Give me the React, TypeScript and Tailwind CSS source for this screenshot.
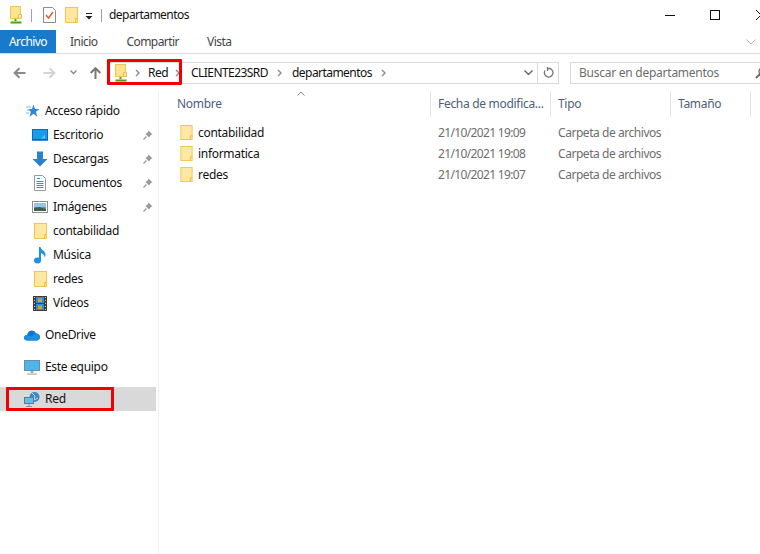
import type { ReactNode } from 'react'

const font = { fontFamily: '"Noto Sans", sans-serif' }

function Folder({ className = 'h-[16px] w-[13px]' }: { className?: string }) {
  return (
    <svg viewBox="0 0 13 16" className={className}>
      <rect x="0.5" y="0.5" width="12" height="15" fill="#ffe8a4" stroke="#f0c648" />
      <path d="M10.5 15.5v-4h2" fill="#fbd96f" stroke="#ecc04a" />
    </svg>
  )
}

function NetFolder() {
  return (
    <svg viewBox="0 0 13 18" className="h-[18px] w-[13px]">
      <rect x="0.5" y="0.5" width="10" height="12" fill="#ffe48f" stroke="#eec754" />
      <path d="M8.5 12.5v-4h3v4z" fill="#ffe9a8" stroke="#e8bf4d" />
      <path d="M5.5 13v2" stroke="#4a9c1a" strokeWidth="2" />
      <path d="M0.5 16.5h11" stroke="#44a512" strokeWidth="2" />
    </svg>
  )
}

function Checklist() {
  return (
    <svg viewBox="0 0 13 16" className="h-[16px] w-[13px]">
      <path d="M.5.5h9l3 3v12H.5z" fill="#fff" stroke="#8c8c8c" />
      <path d="M3 8l2.5 3L10 5" fill="none" stroke="#e2582c" strokeWidth="1.4" />
    </svg>
  )
}

function Arrow({ color, flip = false, up = false }: { color: string; flip?: boolean; up?: boolean }) {
  const rotate = up ? 'rotate-90' : flip ? 'rotate-180' : ''
  return (
    <svg viewBox="0 0 13 12" className={`h-[12px] w-[13px] ${rotate}`}>
      <path d="M12.5 6H2M6.5 1.2L1.6 6l4.9 4.8" fill="none" stroke={color} strokeWidth="2" />
    </svg>
  )
}

function Chevron({ color = '#8a8a8a', className = '' }: { color?: string; className?: string }) {
  return (
    <svg viewBox="0 0 5 8" className={`h-[8px] w-[5px] ${className}`}>
      <path d="M1 1l3 3-3 3" fill="none" stroke={color} strokeWidth="1.4" />
    </svg>
  )
}

function ChevronDown({ w, color, stroke = 1.4 }: { w: number; color: string; stroke?: number }) {
  return (
    <svg width={w} height={w / 2 + 1} viewBox={`0 0 ${w} ${w / 2 + 1}`}>
      <path d={`M.5 .5L${w / 2} ${w / 2}L${w - 0.5} .5`} fill="none" stroke={color} strokeWidth={stroke} />
    </svg>
  )
}

function Pin() {
  return (
    <svg viewBox="0 0 10 10" className="h-[10px] w-[10px]">
      <path d="M5.5 0.5L9.5 4.5L8 5L6 7.5L2.5 4L5 2z" fill="#9a9a9a" />
      <path d="M3.5 6.5L0.5 9.5" stroke="#9a9a9a" strokeWidth="1.2" />
    </svg>
  )
}

function QuickStar() {
  return (
    <svg viewBox="0 0 16 14" className="h-[14px] w-[16px]">
      <path d="M9.5 0.5L11 5h4.5l-3.6 2.8 1.4 5-3.8-3-4 3 1.4-5L3.8 5H8z" fill="#2f86d4" />
      <path d="M2 3h5M3 6h3M2 9h3" stroke="#7db9e8" strokeWidth="1" />
    </svg>
  )
}

function Desktop() {
  return (
    <svg viewBox="0 0 16 12" className="h-[12px] w-[16px]">
      <rect x="0.5" y="0.5" width="15" height="10" fill="#1a9be8" stroke="#0a6cb8" />
      <path d="M9 9.5l4-4v4z" fill="#5cc0f5" />
      <path d="M0 11.5h16" stroke="#3b8cc8" />
    </svg>
  )
}

function Downloads() {
  return (
    <svg viewBox="0 0 16 16" className="h-[16px] w-[16px]">
      <path d="M5 0.5h6V8h4.5L8 15.5.5 8H5z" fill="#2f7fd0" />
    </svg>
  )
}

function Documents() {
  return (
    <svg viewBox="0 0 12 16" className="h-[16px] w-[12px]">
      <path d="M.5.5h8l3 3v12H.5z" fill="#fff" stroke="#9a9a9a" />
      <path d="M3 3.500h3M2.500 6.500h7M2.500 8.500h7M2.500 10.500h7M2.500 12.500h7" stroke="#3f8ccc" />
    </svg>
  )
}

function Pictures() {
  return (
    <svg viewBox="0 0 16 12" className="h-[12px] w-[16px]">
      <rect x="0.5" y="0.5" width="15" height="11" fill="#fff" stroke="#8f8f8f" />
      <rect x="2" y="2" width="12" height="4" fill="#9cc4e4" />
      <path d="M2 6h12v4H2z" fill="#6f9a78" />
      <path d="M2 7l5-1 7 2v2H2z" fill="#3f5f4c" />
    </svg>
  )
}

function Music() {
  return (
    <svg viewBox="0 0 12 17" className="h-[17px] w-[12px]">
      <ellipse cx="3.500" cy="13.500" rx="3.500" ry="3" fill="#1a93e6" />
      <path d="M5 14V0h1.500c.5 3 5 3.500 5 8 0 1.200-.3 2-.8 2.800 0-2.800-2-4.300-3.700-4.800V14z" fill="#1a93e6" />
    </svg>
  )
}

function Videos() {
  return (
    <svg viewBox="0 0 14 15" className="h-[15px] w-[14px]">
      <rect x="0" y="0" width="14" height="15" fill="#3d3d3d" />
      <path d="M1 1.500h1M1 4.500h1M1 7.500h1M1 10.500h1M1 13.500h1M12 1.500h1M12 4.500h1M12 7.500h1M12 10.500h1M12 13.500h1" stroke="#d0d0d0" />
      <rect x="3" y="1" width="8" height="6" fill="#2f8fd8" />
      <rect x="3" y="8" width="8" height="6" fill="#2f8fd8" />
      <rect x="5" y="2.500" width="4" height="3.500" fill="#c9a13a" />
      <rect x="5" y="9.500" width="4" height="3.500" fill="#c9a13a" />
    </svg>
  )
}

function OneDrive() {
  return (
    <svg viewBox="0 0 16 11" className="h-[11px] w-[16px]">
      <path d="M3.500 10.500C1.500 10.500 0 9.300 0 7.700 0 6.200 1.300 5 3 5c.5-2.600 2.500-4.500 4.800-4.500 1.900 0 3.500 1.200 4.200 3 2.300-.1 4 1.500 4 3.500s-1.500 3.500-3.500 3.500z" fill="#0f78d4" />
      <path d="M3 10.500c-1.500 0-3-1-3-2.800C0 6.200 1.300 5 3 5l4 1.500 5-3c2.300-.1 4 1.500 4 3.500 0 1.500-1 3.500-3.500 3.500z" fill="#1c90e0" />
    </svg>
  )
}

function Computer() {
  return (
    <svg viewBox="0 0 16 15" className="h-[15px] w-[16px]">
      <rect x="0.5" y="0.5" width="15" height="10" fill="#4fb4ea" stroke="#6c8ca4" />
      <path d="M8 11v2" stroke="#9fb0bc" strokeWidth="3" />
      <path d="M3 14h10" stroke="#8ca0ae" />
    </svg>
  )
}

function Network() {
  return (
    <svg viewBox="0 0 16 15" className="h-[15px] w-[16px]">
      <circle cx="10.500" cy="5" r="5" fill="#3e88c6" />
      <path d="M8 1l3 3-1 4 4-2" stroke="#b8d8ee" fill="none" />
      <rect x="0.500" y="5.500" width="9" height="6" fill="#63bcec" stroke="#5a7d96" />
      <path d="M5 12v2M2 14.500h6" stroke="#83959f" />
    </svg>
  )
}

type NavRow = { icon: ReactNode; label: string; pin?: boolean; sub?: boolean; gap?: boolean; selected?: boolean }

const quick: NavRow[] = [
  { icon: <QuickStar />, label: 'Acceso rápido' },
  { icon: <Desktop />, label: 'Escritorio', pin: true, sub: true },
  { icon: <Downloads />, label: 'Descargas', pin: true, sub: true },
  { icon: <Documents />, label: 'Documentos', pin: true, sub: true },
  { icon: <Pictures />, label: 'Imágenes', pin: true, sub: true },
  { icon: <Folder />, label: 'contabilidad', sub: true },
  { icon: <Music />, label: 'Música', sub: true },
  { icon: <Folder />, label: 'redes', sub: true },
  { icon: <Videos />, label: 'Vídeos', sub: true },
  { icon: <OneDrive />, label: 'OneDrive', gap: true },
  { icon: <Computer />, label: 'Este equipo', gap: true },
  { icon: <Network />, label: 'Red', gap: true, selected: true },
]

const files = [
  { name: 'contabilidad', date: '21/10/2021 19:09' },
  { name: 'informatica', date: '21/10/2021 19:08' },
  { name: 'redes', date: '21/10/2021 19:07' },
]

function SidebarRow({ row }: { row: NavRow }) {
  return (
    <div
      className={`flex h-[24px] items-center ${row.gap ? 'mt-[8px]' : ''} ${row.selected ? 'bg-[#d9d9d9]' : ''} ${
        row.sub ? 'pl-[32px]' : 'pl-[24px]'
      }`}
    >
      <span className="mr-[5px] flex w-[16px] shrink-0 items-center justify-center">{row.icon}</span>
      <span className="flex-1 whitespace-nowrap">{row.label}</span>
      {row.pin && (
        <span className="mr-[3px] flex w-[10px] justify-center">
          <Pin />
        </span>
      )}
    </div>
  )
}

export default function App() {
  return (
    <div style={font} className="relative h-[554px] w-[760px] overflow-hidden bg-white text-[12px] leading-none tracking-[-0.3px] text-[#1a1a1a]">
      {/* title bar */}
      <div className="flex h-[30px] items-center">
        <div className="ml-[10px] flex w-[13px]"><NetFolder /></div>
        <div className="ml-[8px] h-[13px] w-px bg-[#a0a0a0]" />
        <div className="ml-[11px] flex"><Checklist /></div>
        <div className="ml-[9px] flex"><Folder /></div>
        <svg viewBox="0 0 8 7" className="ml-[7px] mt-[3px] h-[7px] w-[8px]">
          <path d="M1 .5h6" stroke="#222" />
          <path d="M.5 3h7L4 6.500z" fill="#222" />
        </svg>
        <div className="ml-[8px] h-[13px] w-px bg-[#a0a0a0]" />
        <span className="ml-[7px] tracking-[-0.55px] text-[#111]">departamentos</span>
        <div className="flex-1" />
        <div className="mr-[35px] h-px w-[10px] bg-[#111]" />
        <div className="mr-[36px] h-[10px] w-[10px] border border-[#111]" />
        <svg viewBox="0 0 10 10" className="-mr-[6px] h-[10px] w-[10px] shrink-0">
          <path d="M0 0l10 10M10 0L0 10" stroke="#111" />
        </svg>
      </div>

      {/* ribbon tabs */}
      <div className="flex h-[24px] items-stretch border-b border-[#dadbdc] tracking-[-0.55px]">
        <div className="flex w-[56px] items-center justify-center bg-[#1979ca] text-white">Archivo</div>
        <span className="ml-[14px] flex items-center text-[#444]">Inicio</span>
        <span className="ml-[29px] flex items-center text-[#444]">Compartir</span>
        <span className="ml-[28px] flex items-center text-[#444]">Vista</span>
        <div className="flex flex-1 items-center justify-end pr-[4px]">
          <ChevronDown w={10} color="#b4b4b4" stroke={1} />
        </div>
      </div>

      {/* nav bar */}
      <div className="flex h-[37px] items-center">
        <div className="ml-[13px] flex"><Arrow color="#8a8a8a" /></div>
        <div className="ml-[17px] flex"><Arrow color="#d4d4d4" flip /></div>
        <div className="ml-[14px] flex"><ChevronDown w={7} color="#8a8a8a" /></div>
        <div className="ml-[12px] flex"><Arrow color="#777777" up /></div>
        <div className="ml-[7px] flex h-[22px] w-[450px] shrink-0 items-center border border-[#d9d9d9] pl-[5px] tracking-[-0.55px]">
          <NetFolder />
          <Chevron className="ml-[7px]" />
          <span className="ml-[8px] text-[#111]">Red</span>
          <Chevron className="ml-[7px]" />
          <span className="ml-[11px] text-[#111]">CLIENTE23SRD</span>
          <Chevron className="ml-[9px]" />
          <span className="ml-[10px] text-[#111]">departamentos</span>
          <Chevron className="ml-[9px]" />
          <div className="flex-1" />
          <ChevronDown w={9} color="#666666" />
          <div className="ml-[4px] h-full w-px bg-[#d9d9d9]" />
          <svg viewBox="0 0 12 12" className="mx-[4px] h-[12px] w-[12px]">
            <path d="M5 1.500h2.500A4.300 4.300 0 1 1 3 3.500" fill="none" stroke="#777" strokeWidth="1.300" />
            <path d="M5.500 0v4" stroke="#777" strokeWidth="1.300" />
          </svg>
        </div>
        <div className="ml-[11px] flex h-[22px] w-[210px] shrink-0 items-center border border-[#d9d9d9] pl-[8px] tracking-[-0.25px] text-[#6d6d6d]">
          <span>Buscar en departamentos</span>
          <svg viewBox="0 0 12 12" className="ml-[36px] h-[12px] w-[12px] shrink-0">
            <circle cx="7.500" cy="4.500" r="3.500" fill="none" stroke="#666" strokeWidth="1.300" />
            <path d="M5 7l-4 4" stroke="#666" strokeWidth="1.800" />
          </svg>
        </div>
      </div>

      {/* body */}
      <div className="flex h-[463px]">
        <div className="w-[159px] shrink-0 border-r border-[#f0f0f0] pt-[8px]">
          <div className="w-[156px] text-[#111]">
            {quick.map((row) => (
              <SidebarRow key={row.label} row={row} />
            ))}
          </div>
        </div>

        <div className="relative flex-1">
          <div className="grid h-[26px] grid-cols-[272px_120px_120px_80px] items-stretch text-[#4c607a]">
            <div className="border-r border-[#e5e5e5] pl-[18px] pt-[7px]">Nombre</div>
            <div className="border-r border-[#e5e5e5] pl-[7px] pt-[7px]">Fecha de modifica...</div>
            <div className="border-r border-[#e5e5e5] pl-[7px] pt-[7px]">Tipo</div>
            <div className="border-r border-[#e5e5e5] pl-[7px] pt-[7px]">Tamaño</div>
          </div>
          {/* sort indicator */}
          <svg viewBox="0 0 8 5" className="absolute left-[138px] top-[0px] h-[5px] w-[8px]">
            <path d="M.5 4.500L4 1l3.500 3.500" fill="none" stroke="#8a8a8a" />
          </svg>
          <div className="pt-[5px]">
            {files.map((f) => (
              <div key={f.name} className="grid h-[21px] grid-cols-[272px_120px_120px] items-center">
                <div className="flex items-center pl-[21px] text-[#111]">
                  <Folder className="h-[15px] w-[13px]" />
                  <span className="ml-[5px]">{f.name}</span>
                </div>
                <span className="whitespace-nowrap pl-[7px] tracking-[-0.65px] text-[#6d6d6d]">{f.date}</span>
                <span className="whitespace-nowrap pl-[7px] tracking-[-0.45px] text-[#6d6d6d]">Carpeta de archivos</span>
              </div>
            ))}
          </div>
        </div>
      </div>

      {/* red annotation boxes */}
      <div className="absolute left-[107px] top-[59px] h-[26px] w-[75px] rounded-[1px] border-[3px] border-[#f00000]" />
      <div className="absolute left-[6px] top-[387px] h-[24px] w-[108px] rounded-[1px] border-[3px] border-[#f00000]" />
    </div>
  )
}
